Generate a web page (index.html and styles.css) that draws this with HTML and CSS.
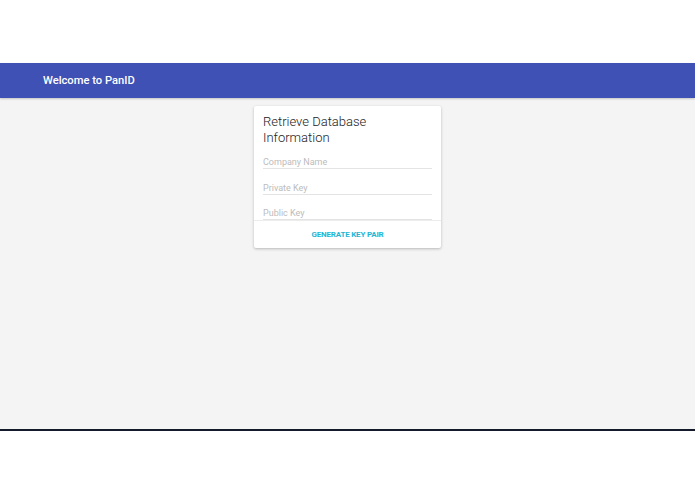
FILE: index.html
```html
<html>
<head>
    <meta charset="UTF-8">
    <meta name="viewport" content="width=device-width, initial-scale=1.0">
    <link rel="stylesheet" href="styles.css">
</head>
<body>
    <div class="app">
        <div class="toolbar">Welcome to PanID</div>
        <div class="content">
            <div class="card">
                <div class="cardtitle">Retrieve Database Information</div>
                <div class="field first"><input type="text" placeholder="Company Name"></div>
                <div class="field second"><input type="text" placeholder="Private Key"></div>
                <div class="field"><input type="text" placeholder="Public Key"></div>
                <div class="cardactions">
                    <button>Generate Key Pair</button>
                </div>
            </div>
        </div>
    </div>
</body>
</html>
```

FILE: styles.css
```css
* {
    margin: 0;
    padding: 0;
    box-sizing: border-box;
}

body {
    background: white;
    font-family: Roboto, "Liberation Sans", sans-serif;
    padding-top: 63px;
}

.app {
    height: 368px;
    background: #f4f4f4;
    border-bottom: 2px solid #151a2b;
    display: flex;
    flex-direction: column;
}

.toolbar {
    height: 35px;
    background: #3f51b5;
    color: white;
    font-size: 11.2px;
    font-weight: 500;
    padding-left: 43px;
    display: flex;
    align-items: center;
    box-shadow: 0 1px 2px rgba(0, 0, 0, 0.2);
}

.content {
    display: flex;
    justify-content: center;
    padding-top: 8px;
}

.card {
    width: 187px;
    background: white;
    border-radius: 2px;
    box-shadow: 0 1px 3px rgba(0, 0, 0, 0.25);
}

.cardtitle {
    font-size: 13px;
    font-weight: 300;
    line-height: 16px;
    color: #222;
    padding: 8px 9px 0 9px;
    width: 140px;
}

.field {
    padding: 0 9px;
    height: 25px;
    display: flex;
    align-items: flex-end;
}

.field.first {
    height: 23px;
}

.field.second {
    height: 26px;
}

.field input {
    width: 100%;
    border: none;
    border-bottom: 1px solid #e4e4e4;
    font-family: Roboto, "Liberation Sans", sans-serif;
    font-size: 9px;
    padding-bottom: 1px;
    outline: none;
    background: transparent;
}

.field input::placeholder {
    color: #bcbcbc;
}

.cardactions {
    border-top: 1px solid #ececec;
    height: 28px;
    display: flex;
    align-items: center;
    justify-content: center;
}

.cardactions button {
    border: none;
    background: transparent;
    color: #1fb6d3;
    font-family: Roboto, "Liberation Sans", sans-serif;
    font-size: 8px;
    font-weight: 700;
    letter-spacing: -0.2px;
    text-transform: uppercase;
}
```
